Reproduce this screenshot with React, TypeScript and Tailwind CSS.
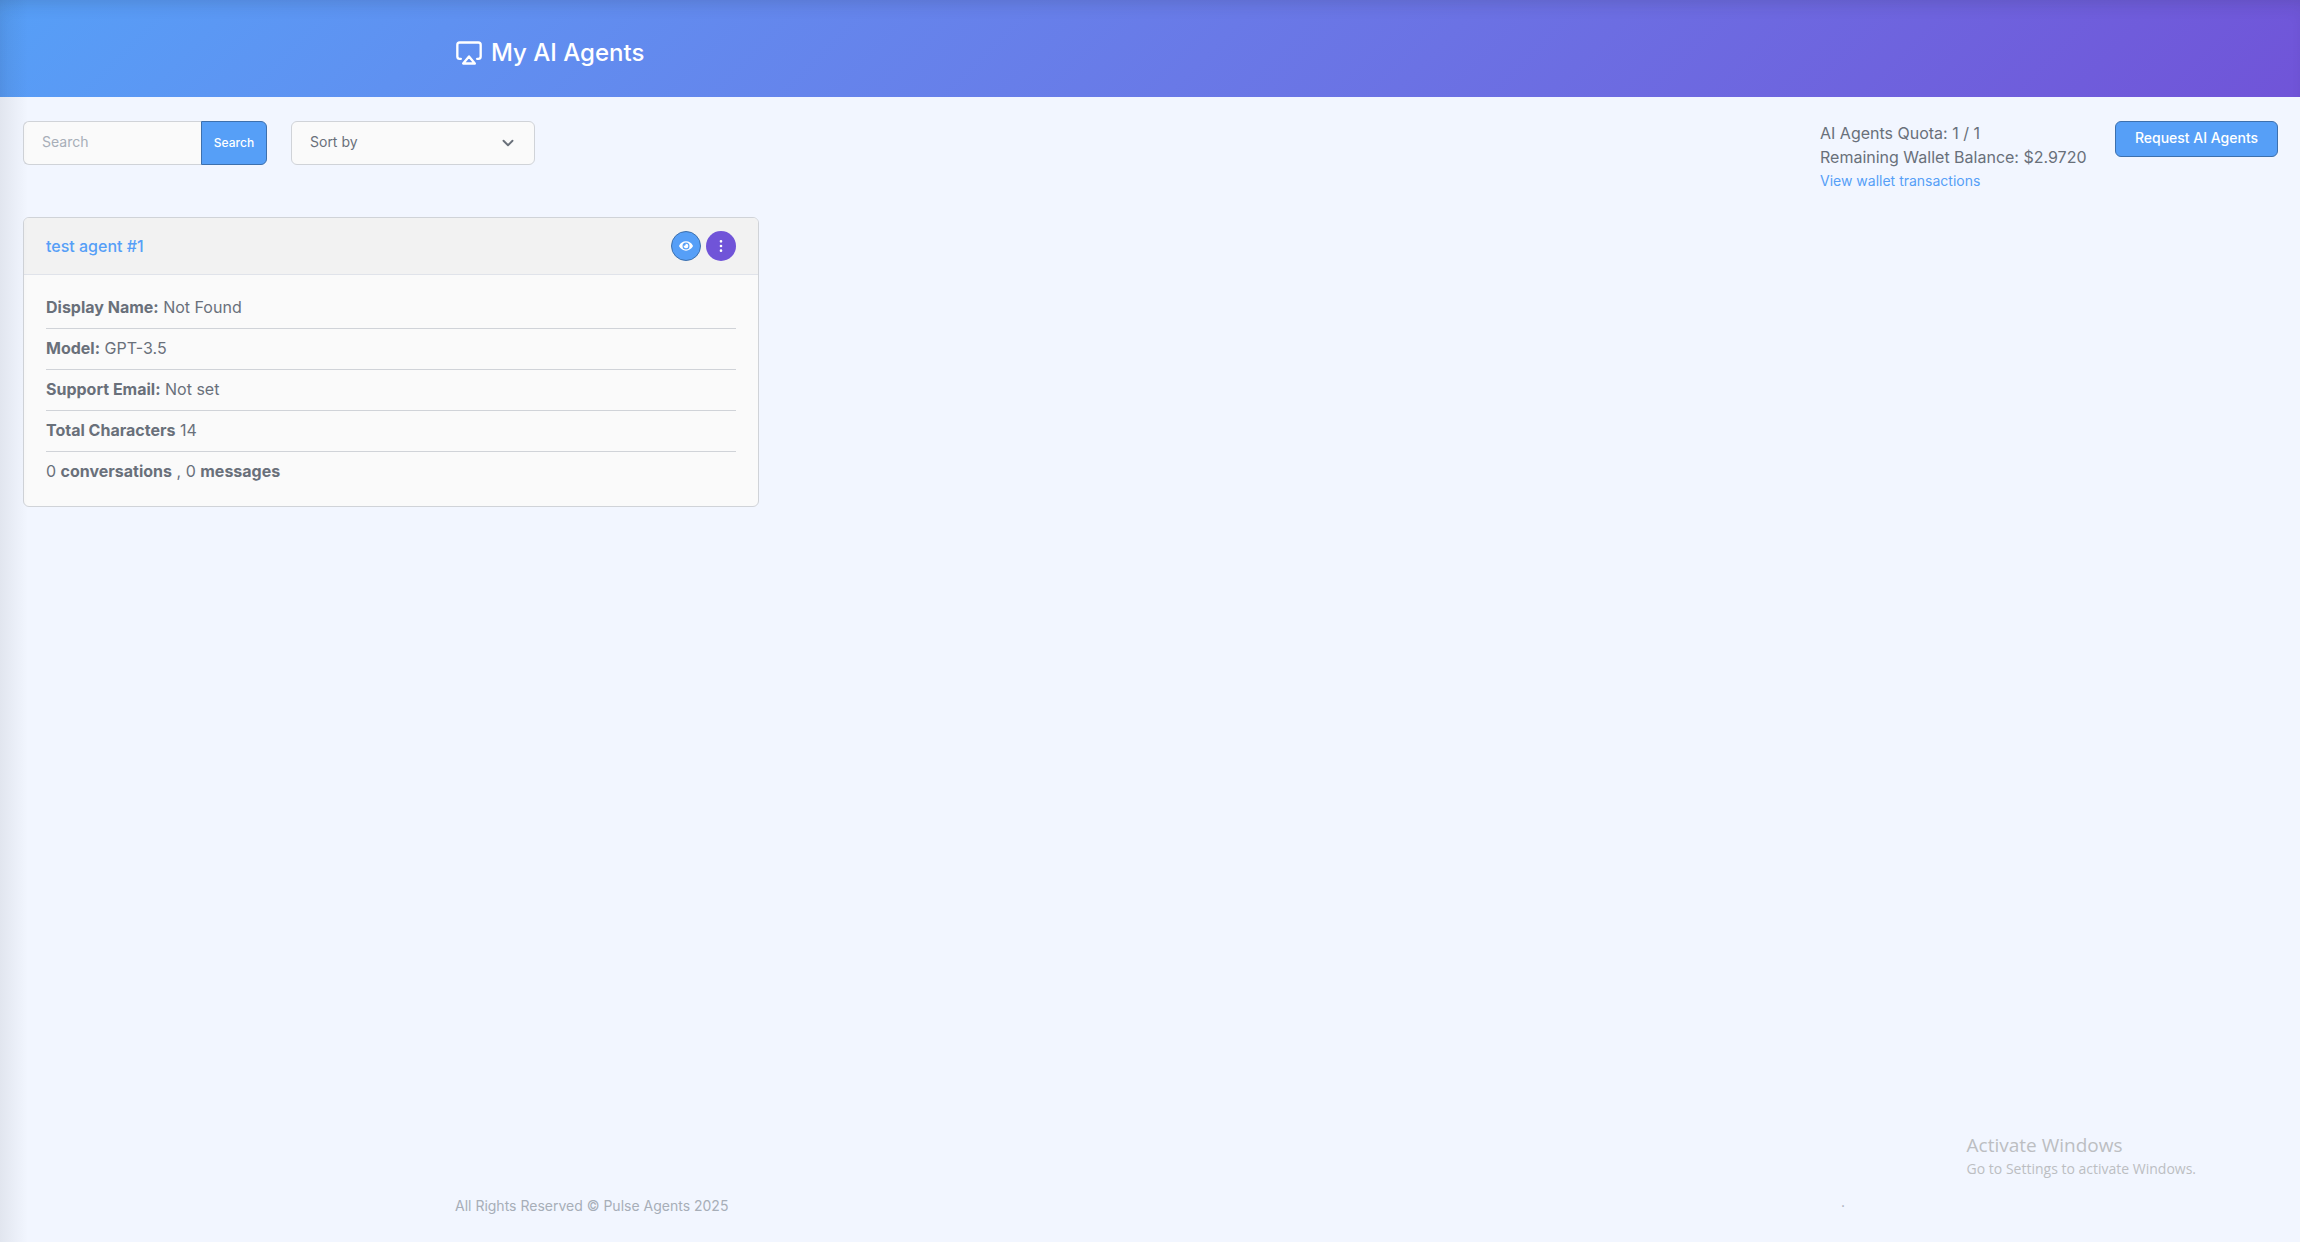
import { FormEvent, useState } from "react";
import { FiAirplay, FiChevronDown, FiMoreVertical } from "react-icons/fi";
import { FaEye } from "react-icons/fa";

interface Agent {
  id: number;
  name: string;
  displayName: string;
  model: string;
  supportEmail: string;
  characters: number;
  conversations: number;
  messages: number;
}

const agents: Agent[] = [
  {
    id: 1,
    name: "test agent #1",
    displayName: "Not Found",
    model: "GPT-3.5",
    supportEmail: "Not set",
    characters: 14,
    conversations: 0,
    messages: 0,
  },
];

function Header() {
  return (
    <header className="bg-linear-135 from-[#569ff7] to-[#7054d8] shadow-[inset_0_12px_18px_-10px_rgba(33,40,50,0.18)]">
      <div className="mx-auto flex h-[97px] max-w-[1438px] items-center px-6 pt-2">
        <h1 className="flex items-center gap-2 text-2xl font-medium text-white">
          <FiAirplay className="size-7" />
          My AI Agents
        </h1>
      </div>
    </header>
  );
}

function Toolbar() {
  const [search, setSearch] = useState("");

  const onSubmit = (e: FormEvent) => {
    e.preventDefault();
  };

  return (
    <div className="flex items-start justify-between">
      <div className="flex gap-6">
        <form className="flex h-11" onSubmit={onSubmit}>
          <input
            type="text"
            aria-label="Search agents"
            placeholder="Search"
            value={search}
            onChange={(e) => setSearch(e.target.value)}
            className="w-[178px] rounded-l-md border border-r-0 border-[#d0d3d8] bg-[#fafafa] px-[18px] pb-0.5 text-sm placeholder:text-[#a7aeb8] focus:outline-none"
          />
          <button
            type="submit"
            className="w-[66px] rounded-r-md border border-[#3d70ad] bg-[#569ff7] text-xs font-medium text-white"
          >
            Search
          </button>
        </form>
        <div className="grid h-11 w-[244px] items-center">
          <select
            aria-label="Sort by"
            className="col-start-1 row-start-1 h-full w-full appearance-none rounded-md border border-[#d0d3d8] bg-[#fafafa] px-[18px] pb-0.5 text-sm focus:outline-none"
          >
            <option>Sort by</option>
            <option>Name</option>
            <option>Newest</option>
          </select>
          <FiChevronDown className="pointer-events-none col-start-1 row-start-1 mr-[18px] size-[18px] justify-self-end stroke-[2.5]" />
        </div>
      </div>
      <div className="flex items-start gap-6">
        <div className="min-w-[271px] text-base leading-6">
          <p>AI Agents Quota: 1 / 1</p>
          <p>Remaining Wallet Balance: $2.9720</p>
          <a
            href="#transactions"
            className="block text-sm leading-6 text-[#569ff7]"
          >
            View wallet transactions
          </a>
        </div>
        <button
          type="button"
          className="h-9 w-[163px] rounded-md border border-[#3d70ad] bg-[#569ff7] pb-0.5 text-sm font-medium text-white"
        >
          Request AI Agents
        </button>
      </div>
    </div>
  );
}

function AgentCard({ agent }: { agent: Agent }) {
  return (
    <article className="overflow-hidden rounded-md border border-[#d0d3d8] bg-[#fafafa]">
      <div className="flex h-[57px] items-center justify-between border-b border-[#e0e3ea] bg-[#f2f2f2] px-[22px]">
        <a href="#agent" className="font-medium text-[#569ff7]">
          {agent.name}
        </a>
        <div className="flex gap-[5px]">
          <button
            type="button"
            aria-label="View agent"
            className="flex size-[30px] items-center justify-center rounded-full border border-[#3d70ad] bg-[#569ff7] text-white"
          >
            <FaEye className="size-3.5" />
          </button>
          <button
            type="button"
            aria-label="More actions"
            className="flex size-[30px] items-center justify-center rounded-full bg-[#7054d8] text-white"
          >
            <FiMoreVertical className="size-4" />
          </button>
        </div>
      </div>
      <div className="divide-y divide-[#d0d3d8] px-[22px] py-[13px]">
        <p className="h-[41px] leading-[38px]">
          <b>Display Name:</b> {agent.displayName}
        </p>
        <p className="h-[41px] leading-[38px]">
          <b>Model:</b> {agent.model}
        </p>
        <p className="h-[41px] leading-[38px]">
          <b>Support Email:</b> {agent.supportEmail}
        </p>
        <p className="h-[41px] leading-[38px]">
          <b>Total Characters</b> {agent.characters}
        </p>
        <p className="h-[41px] leading-[38px]">
          {agent.conversations} <b>conversations</b> , {agent.messages}{" "}
          <b>messages</b>
        </p>
      </div>
    </article>
  );
}

export default function App() {
  return (
    <div className="relative flex min-h-screen flex-col bg-[#f2f6ff] font-['Inter',sans-serif] text-[#69707a]">
      <Header />
      <main className="flex-1 pt-6 pr-[22px] pl-[23px]">
        <Toolbar />
        <div className="mt-6 grid grid-cols-3 gap-6">
          {agents.map((agent) => (
            <AgentCard key={agent.id} agent={agent} />
          ))}
        </div>
      </main>
      <footer className="mx-auto flex w-full max-w-[1438px] justify-between px-6 pb-6 text-sm leading-6 text-[#a7aeb8]">
        <span>All Rights Reserved © Pulse Agents 2025</span>
        <span>·</span>
      </footer>
      <div className="pointer-events-none absolute inset-y-0 left-0 w-7 bg-linear-to-r from-[#212832]/8 to-transparent" />
      <div className="pointer-events-none absolute right-[104px] bottom-[61px] font-['Open_Sans',sans-serif] text-[#bcbec2]">
        <p className="text-[19px] leading-6">Activate Windows</p>
        <p className="text-sm leading-6">Go to Settings to activate Windows.</p>
      </div>
    </div>
  );
}
